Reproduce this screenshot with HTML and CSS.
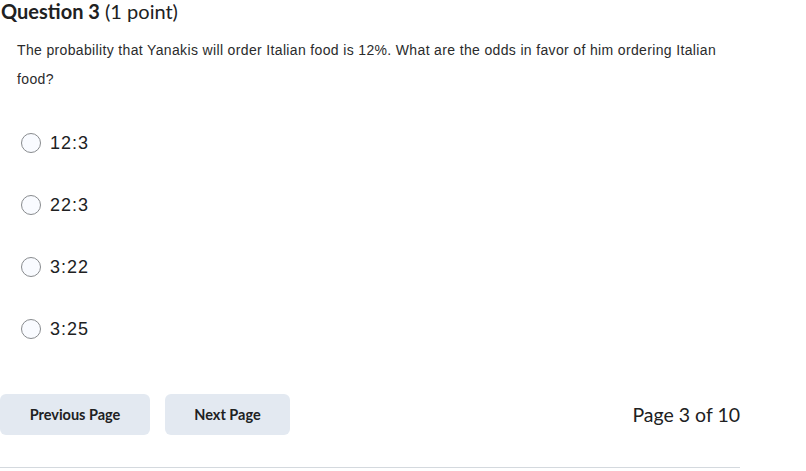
FILE: index.html
```html
<!DOCTYPE html>
<html>
<head>
<meta charset="utf-8">
<link rel="stylesheet" href="styles.css">
</head>
<body>
<div class="page">
  <h2 class="title"><strong>Question 3</strong> <span class="pts">(1 point)</span></h2>
  <p class="question">The probability that Yanakis will order Italian food is 12%. What are the odds in favor of him ordering Italian food?</p>
  <ul class="options">
    <li class="option"><span class="radio"></span><span class="label">12:3</span></li>
    <li class="option"><span class="radio"></span><span class="label">22:3</span></li>
    <li class="option"><span class="radio"></span><span class="label">3:22</span></li>
    <li class="option"><span class="radio"></span><span class="label">3:25</span></li>
  </ul>
  <div class="nav">
    <button class="btn btn-prev">Previous Page</button>
    <button class="btn btn-next">Next Page</button>
    <span class="pageinfo">Page 3 of 10</span>
  </div>
  <div class="rule"></div>
</div>
</body>
</html>
```
FILE: styles.css
```css
html, body {
  margin: 0;
  padding: 0;
  background: #ffffff;
}
.page {
  width: 740px;
  color: #202122;
}
.title {
  margin: 0;
  padding: 0 0 0 1px;
  font-family: Lato, "Liberation Sans", sans-serif;
  font-size: 20px;
  line-height: 22px;
  font-weight: 400;
  color: #202122;
}
.title strong {
  font-weight: 700;
}
.question {
  margin: 0;
  padding: 14px 0 0 17px;
  font-family: "Liberation Sans", Arial, sans-serif;
  font-size: 14px;
  line-height: 29px;
  letter-spacing: 0.35px;
  color: #2a2b2c;
  width: 710px;
}
.options {
  list-style: none;
  margin: 0;
  padding: 38px 0 0 21px;
  display: flex;
  flex-direction: column;
  gap: 40px;
}
.option {
  display: flex;
  align-items: center;
  height: 22px;
  gap: 9px;
}
.radio {
  width: 20px;
  height: 20px;
  border: 1px solid #888b8e;
  border-radius: 50%;
  background: #f9fbff;
  box-sizing: border-box;
  display: inline-block;
}
.label {
  font-family: "Liberation Sans", Arial, sans-serif;
  font-size: 18px;
  letter-spacing: 1px;
  color: #202122;
}
.nav {
  display: flex;
  align-items: center;
  margin-top: 54px;
  gap: 15px;
}
.btn {
  border: none;
  border-radius: 6px;
  background: #e3e9f1;
  height: 41px;
  font-family: Lato, "Liberation Sans", sans-serif;
  font-weight: 700;
  font-size: 14.5px;
  color: #202122;
  padding: 0;
}
.btn-prev { width: 150px; }
.btn-next { width: 125px; }
.pageinfo {
  margin-left: auto;
  font-family: Lato, "Liberation Sans", sans-serif;
  font-size: 19.5px;
  color: #202122;
}
.rule {
  margin-top: 32px;
  height: 1px;
  background: #d4d9de;
}
```
